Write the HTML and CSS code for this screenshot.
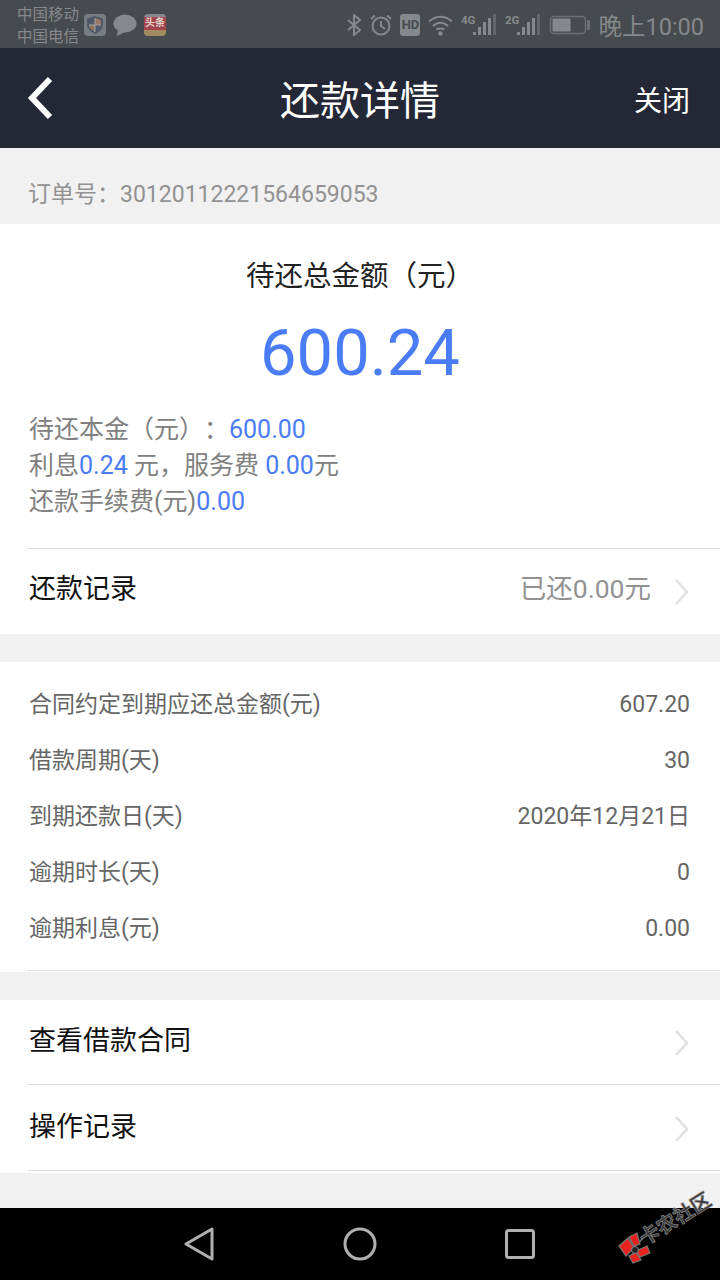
FILE: index.html
```html
<!DOCTYPE html>
<html lang="zh-CN">
<head>
  <meta charset="UTF-8" />
  <meta name="viewport" content="width=device-width, initial-scale=1.0" />
  <title>还款详情</title>
  <link rel="stylesheet" href="styles.css">
</head>
<body>
  <div class="status-bar">
    <div class="carrier"><span>中国移动</span><span>中国电信</span></div>
    <div class="notify-icons">
      <svg width="22" height="22" viewBox="0 0 22 22">
        <rect width="22" height="22" rx="4" fill="#797c80"/>
        <path d="M11 2 L19 4.500 V11 C19 15 15 18 11 20 C7 18 3 15 3 11 V4.500 Z" fill="#50596a"/>
        <path d="M11 4 L17 6 V11 H11 Z" fill="#9a7764"/>
        <path d="M11 11 H5 C5 14 8 16 11 18 Z" fill="#93775f"/>
        <path d="M11 4 V18 M5 11 H17" stroke="#a0a3a6" stroke-width="1"/>
      </svg>
      <svg width="24" height="22" viewBox="0 0 24 22">
        <ellipse cx="12" cy="9.500" rx="11.500" ry="9" fill="#85888c"/>
        <path d="M5 15 L4 22 L12 18 Z" fill="#85888c"/>
      </svg>
      <div class="news-icon"><span class="news-title">头条</span></div>
    </div>
    <div class="sys-icons">
      <svg width="16" height="22" viewBox="0 0 16 22" fill="none" stroke="#85888c" stroke-width="2"><path d="M2 6 L14 16 L8 21 V1 L14 6 L2 16"/></svg>
      <svg width="22" height="22" viewBox="0 0 22 22" fill="none" stroke="#85888c" stroke-width="2"><circle cx="11" cy="12" r="8.500"/><path d="M11 7 V12 L15 15 M1 5 L5 1.500 M21 5 L17 1.500"/></svg>
      <div class="hd">HD</div>
      <svg width="25" height="21" viewBox="0 0 25 21" fill="none" stroke="#85888c" stroke-width="2"><path d="M1 6.500 C8 0 17 0 24 6.500 M5 11 C9.500 6.500 15.500 6.500 20 11 M8.500 14.500 C10.500 13 14.500 13 16.500 14.500"/><circle cx="12.500" cy="18.500" r="2.200" fill="#85888c" stroke="none"/></svg>
      <svg width="36" height="22" viewBox="0 0 36 22" fill="#85888c">
        <text x="0" y="10" class="sig-label">4G</text>
        <rect x="12" y="18" width="3" height="3"/><rect x="17" y="13" width="3" height="8"/><rect x="22" y="8" width="3" height="13"/><rect x="27" y="4" width="3" height="17"/><rect x="32" y="0" width="3" height="21" fill="#62666a"/>
      </svg>
      <svg width="36" height="22" viewBox="0 0 36 22" fill="#85888c">
        <text x="0" y="10" class="sig-label">2G</text>
        <rect x="12" y="18" width="3" height="3"/><rect x="17" y="13" width="3" height="8"/><rect x="22" y="8" width="3" height="13"/><rect x="27" y="4" width="3" height="17"/><rect x="32" y="0" width="3" height="21" fill="#62666a"/>
      </svg>
      <svg width="42" height="22" viewBox="0 0 42 22"><rect x="1.500" y="2.500" width="35" height="17" rx="3.500" fill="none" stroke="#6c7074" stroke-width="1.500"/><rect x="3.500" y="4.500" width="18" height="13" rx="1" fill="#85888c"/><rect x="38" y="6" width="3" height="10" rx="1" fill="#6c7074"/></svg>
    </div>
    <div class="clock">晚上10:00</div>
  </div>

  <header class="top-bar">
    <svg class="back" width="28" height="44" viewBox="0 0 28 44" fill="none" stroke="#fff" stroke-width="6"><path d="M24 3 L6 22 L24 41"/></svg>
    <h1>还款详情</h1>
    <span class="close">关闭</span>
  </header>

  <div class="order-no">订单号：30120112221564659053</div>

  <section class="card">
    <div class="total-label">待还总金额（元）</div>
    <div class="total-num">600.24</div>
    <div class="breakdown">
      <p>待还本金（元）：<em>600.00</em></p>
      <p>利息<em>0.24</em> 元，服务费 <em>0.00</em>元</p>
      <p>还款手续费(元)<em>0.00</em></p>
    </div>
    <div class="link-row split first-link">
      <span class="link-title">还款记录</span>
      <span class="paid">已还0.00元</span>
      <svg class="chev" width="16" height="28" viewBox="0 0 16 28" fill="none" stroke="#e0e0e0" stroke-width="2.500"><path d="M2 2 L13 14 L2 26"/></svg>
    </div>
  </section>

  <section class="card details">
    <div class="detail-row"><span>合同约定到期应还总金额(元)</span><span>607.20</span></div>
    <div class="detail-row"><span>借款周期(天)</span><span>30</span></div>
    <div class="detail-row"><span>到期还款日(天)</span><span>2020年12月21日</span></div>
    <div class="detail-row"><span>逾期时长(天)</span><span>0</span></div>
    <div class="detail-row"><span>逾期利息(元)</span><span>0.00</span></div>
  </section>

  <section class="card links">
    <div class="link-row">
      <span class="link-title">查看借款合同</span>
      <svg class="chev" width="16" height="28" viewBox="0 0 16 28" fill="none" stroke="#e0e0e0" stroke-width="2.500"><path d="M2 2 L13 14 L2 26"/></svg>
    </div>
    <div class="link-row split">
      <span class="link-title">操作记录</span>
      <svg class="chev" width="16" height="28" viewBox="0 0 16 28" fill="none" stroke="#e0e0e0" stroke-width="2.500"><path d="M2 2 L13 14 L2 26"/></svg>
    </div>
  </section>

  <div class="spacer"></div>

  <nav class="nav-bar">
    <svg width="32" height="34" viewBox="0 0 32 34" fill="none" stroke="#b0b0b0" stroke-width="3" stroke-linejoin="round"><path d="M28 2 V32 L2 17 Z"/></svg>
    <svg width="34" height="34" viewBox="0 0 34 34" fill="none" stroke="#b0b0b0" stroke-width="3"><circle cx="17" cy="17" r="15"/></svg>
    <svg width="30" height="30" viewBox="0 0 30 30" fill="none" stroke="#b0b0b0" stroke-width="3" stroke-linejoin="round"><rect x="1.500" y="1.500" width="27" height="27" rx="2"/></svg>
  </nav>

  <svg class="watermark" width="104" height="84" viewBox="0 0 104 84">
    <path d="M22 58 L30 48" stroke="#777" stroke-width="1.500"/>
    <g stroke="#777" stroke-width="1.200" fill="#e8221f">
      <path d="M3 60 L12 52 L18 62 L10 70 Z"/>
      <path d="M13 51 L21 47 L24 58 L18 60 Z"/>
      <path d="M20 65 L31 60 L34 67 L24 71 Z"/>
      <path d="M13 70 L20 66 L25 74 L17 77 Z"/>
    </g>
    <circle cx="19" cy="64" r="3.500" fill="#222" stroke="#888" stroke-width="1"/>
    <text x="29" y="60" transform="rotate(-32 29 60)" class="mark-text">卡农社区</text>
  </svg>
</body>
</html>
```

FILE: styles.css
```css
* {
  box-sizing: border-box;
}

html, body {
  margin: 0;
  height: 1280px;
}

body {
  width: 720px;
  position: relative;
  overflow: hidden;
  display: flex;
  flex-direction: column;
  font-family: Roboto, "Noto Sans CJK SC", sans-serif;
  text-spacing-trim: space-all;
  background-color: #f1f1f1;
}

.status-bar {
  height: 48px;
  flex: none;
  display: flex;
  align-items: center;
  padding: 2px 16px 0 17px;
  background-color: #474b4f;
  color: #85888c;
}

.carrier {
  display: flex;
  flex-direction: column;
  width: 67px;
  padding-top: 1px;
  font-size: 15.500px;
  line-height: 22px;
  white-space: nowrap;
}

.notify-icons {
  display: flex;
  align-items: center;
  gap: 7px;
}

.news-icon {
  width: 22px;
  height: 22px;
  border-radius: 4px;
  background: linear-gradient(#85888c 0 3px, #a3454c 3px 16px, #a08a60 16px);
  overflow: hidden;
  text-align: center;
}

.news-title {
  display: block;
  margin-top: 2px;
  color: #e0d0c8;
  font-size: 10px;
  font-weight: 700;
  line-height: 13px;
  white-space: nowrap;
}

.sys-icons {
  margin-left: auto;
  display: flex;
  align-items: center;
  gap: 8px;
}

.hd {
  width: 20px;
  height: 22px;
  border-radius: 3px;
  background-color: #85888c;
  color: #474b4f;
  font-size: 13px;
  font-weight: 700;
  line-height: 22px;
  text-align: center;
}

.sig-label {
  font-size: 11.500px;
  font-weight: 700;
}

.clock {
  margin-left: 7px;
  font-size: 23.500px;
  white-space: nowrap;
}

.top-bar {
  height: 100px;
  flex: none;
  position: relative;
  display: flex;
  align-items: center;
  justify-content: center;
  background-color: #232736;
  color: #fff;
}

.top-bar h1 {
  margin: 0;
  font-size: 40px;
  font-weight: 400;
}

.back {
  position: absolute;
  left: 26px;
  top: 28px;
}

.close {
  position: absolute;
  right: 30px;
  top: 31px;
  font-size: 28px;
}

.order-no {
  height: 76px;
  flex: none;
  padding: 29px 0 0 28px;
  font-size: 23px;
  line-height: 36px;
  color: #929292;
  white-space: nowrap;
}

.card {
  flex: none;
  background: white;
  padding-left: 28px;
}

.total-label {
  margin-left: -28px;
  padding-top: 32px;
  font-size: 28.500px;
  line-height: 42px;
  text-align: center;
  color: #222;
}

.total-num {
  margin-left: -28px;
  margin-top: 17px;
  font-size: 65px;
  line-height: 76px;
  text-align: center;
  color: #4a7cf6;
}

.breakdown {
  padding: 21px 0 0 1px;
  font-size: 25px;
  line-height: 36px;
  color: #808080;
}

.breakdown p {
  margin: 0;
}

.breakdown em {
  font-style: normal;
  color: #4a7cf6;
}

.link-row {
  height: 84px;
  display: flex;
  align-items: center;
  padding-right: 30px;
}

.link-row.split {
  height: 86px;
  border-top: 1px solid #dcdcdc;
}

.breakdown + .link-row {
  margin-top: 28px;
}

.link-title {
  margin-left: 1px;
  margin-bottom: 2px;
  font-size: 27px;
  line-height: 36px;
  color: #111;
}

.first-link .link-title {
  margin-bottom: 6px;
}

.paid {
  margin-left: auto;
  margin-right: 23px;
  margin-bottom: 6px;
  font-size: 26.500px;
  line-height: 36px;
  color: #929292;
}

.link-title + .chev {
  margin-left: auto;
  margin-top: 2px;
}

.details {
  margin-top: 28px;
  padding-top: 15px;
  padding-bottom: 1px;
}

.details::after {
  content: "";
  display: block;
  border-top: 1px solid #dcdcdc;
  margin-top: 13px;
}

.detail-row {
  height: 56px;
  display: flex;
  align-items: center;
  justify-content: space-between;
  padding: 0 30px 0 1px;
  font-size: 23px;
  line-height: 30px;
  color: #666;
}

.links {
  margin-top: 28px;
  padding-bottom: 2px;
}

.links::after {
  content: "";
  display: block;
  border-top: 1px solid #dcdcdc;
}

.spacer {
  flex: 1;
}

.nav-bar {
  height: 72px;
  flex: none;
  display: grid;
  grid-template-columns: repeat(3, 160px);
  justify-content: center;
  justify-items: center;
  align-items: center;
  background-color: #000;
}

.watermark {
  position: absolute;
  left: 616px;
  top: 1186px;
}

.mark-text {
  font-size: 20px;
  font-weight: 700;
  fill: #3a3a3a;
  stroke: #999;
  stroke-width: 0.6px;
}
```
